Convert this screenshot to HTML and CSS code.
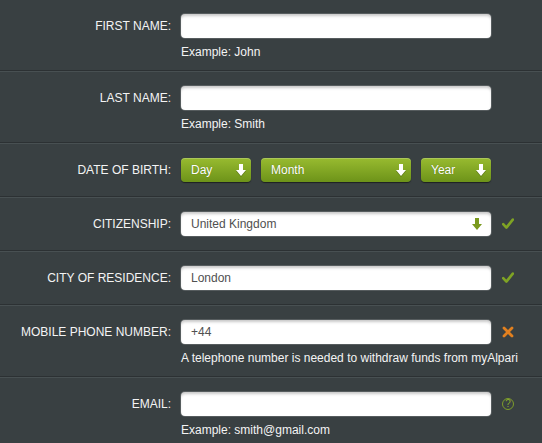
FILE: index.html
```html
<!DOCTYPE html>
<html>
<head>
<meta charset="utf-8">
<link rel="stylesheet" href="styles.css">
</head>
<body>
<div class="form">
  <div class="row">
    <div class="lbl">FIRST NAME:</div>
    <div class="input"></div>
    <div class="icon"></div>
    <div class="hint">Example: John</div>
  </div>
  <div class="row">
    <div class="lbl">LAST NAME:</div>
    <div class="input"></div>
    <div class="icon"></div>
    <div class="hint">Example: Smith</div>
  </div>
  <div class="row">
    <div class="lbl">DATE OF BIRTH:</div>
    <div class="dob">
      <div class="gsel day"><span>Day</span><svg class="arr" viewBox="0 0 10 12"><path d="M3 0h4v6h3l-5 6-5-6h3z"/></svg></div>
      <div class="gsel month"><span>Month</span><svg class="arr" viewBox="0 0 10 12"><path d="M3 0h4v6h3l-5 6-5-6h3z"/></svg></div>
      <div class="gsel year"><span>Year</span><svg class="arr" viewBox="0 0 10 12"><path d="M3 0h4v6h3l-5 6-5-6h3z"/></svg></div>
    </div>
    <div class="icon"></div>
  </div>
  <div class="row">
    <div class="lbl">CITIZENSHIP:</div>
    <div class="input wsel"><span class="val">United Kingdom</span><svg class="garr" viewBox="0 0 10 12"><path d="M3 0h4v6h3l-5 6-5-6h3z"/></svg></div>
    <div class="icon"><svg class="check" viewBox="0 0 12 12"><path d="M1.2 6.2l3.2 3.4 6.4-8"/></svg></div>
  </div>
  <div class="row">
    <div class="lbl">CITY OF RESIDENCE:</div>
    <div class="input"><span class="val">London</span></div>
    <div class="icon"><svg class="check" viewBox="0 0 12 12"><path d="M1.2 6.2l3.2 3.4 6.4-8"/></svg></div>
  </div>
  <div class="row">
    <div class="lbl">MOBILE PHONE NUMBER:</div>
    <div class="input"><span class="val">+44</span></div>
    <div class="icon"><svg class="cross" viewBox="0 0 12 12"><path d="M2 2l8 8M10 2l-8 8"/></svg></div>
    <div class="hint">A telephone number is needed to withdraw funds from myAlpari</div>
  </div>
  <div class="row">
    <div class="lbl">EMAIL:</div>
    <div class="input"></div>
    <div class="icon"><span class="q">?</span></div>
    <div class="hint">Example: smith@gmail.com</div>
  </div>
</div>
</body>
</html>
```
FILE: styles.css
```css
html, body {
  margin: 0;
  padding: 0;
  background: #394042;
}
body {
  font-family: "Liberation Sans", Arial, sans-serif;
  font-size: 12px;
  color: #f2f2f2;
  width: 542px;
  height: 443px;
  overflow: hidden;
}
.row {
  display: grid;
  grid-template-columns: 171px 310px 1fr;
  column-gap: 10px;
  padding: 14px 0;
  border-top: 1px solid #485052;
  border-bottom: 1px solid #2c3133;
}
.row:first-child {
  border-top: none;
}
.row:has(.hint) {
  padding-bottom: 10px;
}
.lbl {
  text-align: right;
  line-height: 24px;
  height: 24px;
  white-space: nowrap;
  color: #f4f4f4;
}
.input {
  height: 24px;
  background: #fff;
  border-radius: 4px;
  box-shadow: inset 0 3px 3px -1px rgba(0,0,0,0.22), 0 0 0 1px rgba(255,255,255,0.15);
  display: flex;
  align-items: center;
  padding: 0 10px;
  box-sizing: border-box;
}
.val {
  color: #505050;
  font-size: 12px;
}
.wsel {
  justify-content: space-between;
}
.garr {
  width: 10px;
  height: 12px;
  fill: #7a9a1e;
  margin-right: -1px;
}
.icon {
  display: flex;
  align-items: center;
  height: 24px;
  padding-left: 1px;
}
.hint {
  grid-column: 2 / 4;
  margin-top: 6px;
  line-height: 16px;
  white-space: nowrap;
  color: #f4f4f4;
}
.dob {
  display: flex;
  gap: 10px;
}
.gsel {
  height: 24px;
  box-sizing: border-box;
  border-radius: 4px;
  background: linear-gradient(#98bb30, #6d9319);
  box-shadow: 0 1px 1px rgba(0,0,0,0.5), inset 0 1px 0 rgba(255,255,255,0.2);
  display: flex;
  align-items: center;
  justify-content: space-between;
  padding: 0 5px 0 10px;
  color: #fff;
  text-shadow: 0 0 1px rgba(60,80,10,0.6);
}
.day, .year { width: 70px; }
.month { width: 150px; }
.arr {
  width: 10px;
  height: 12px;
  fill: #fff;
  filter: drop-shadow(0 1px 0 rgba(60,80,10,0.5));
}
.check {
  width: 12px;
  height: 12px;
  fill: none;
  stroke: #7fa324;
  stroke-width: 2.6;
  stroke-linecap: round;
  stroke-linejoin: round;
}
.cross {
  width: 12px;
  height: 12px;
  fill: none;
  stroke: #e2801f;
  stroke-width: 2.8;
  stroke-linecap: round;
}
.q {
  width: 12px;
  height: 12px;
  box-sizing: border-box;
  border: 1px solid #7e9d2a;
  border-radius: 50%;
  color: #8aaa2e;
  font-size: 10px;
  line-height: 10px;
  text-align: center;
  display: block;
}
```
